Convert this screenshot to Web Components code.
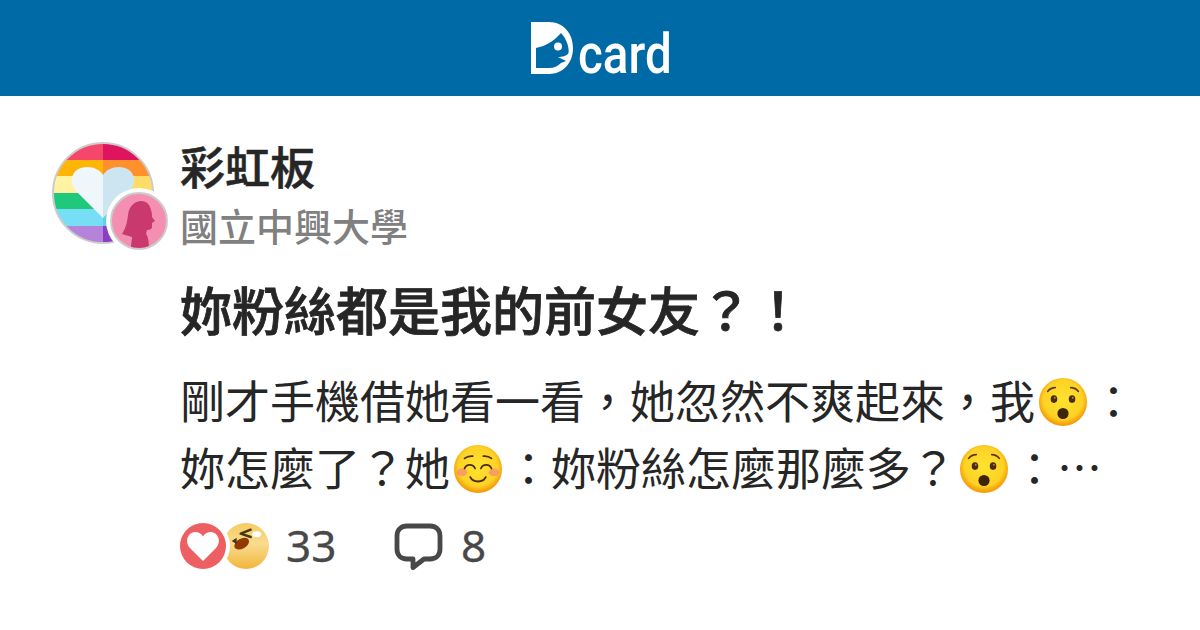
<!DOCTYPE html>
<html lang="zh-Hant">
<head>
<meta charset="utf-8">
<title>Dcard</title>
<style>
  html, body { margin: 0; padding: 0; background: #fff; }
  body { width: 1200px; height: 630px; overflow: hidden; font-family: "Noto Sans CJK TC", "Noto Sans", sans-serif; }
</style>
</head>
<body>
<dc-share-card>
  <span slot="forum">彩虹板</span>
  <span slot="school">國立中興大學</span>
  <span slot="title">妳粉絲都是我的前女友？！</span>
  <span slot="excerpt">剛才手機借她看一看，她忽然不爽起來，我<dc-emoji kind="hushed"></dc-emoji>：<br>妳怎麼了？她<dc-emoji kind="smile"></dc-emoji>：妳粉絲怎麼那麼多？<dc-emoji kind="hushed"></dc-emoji>：…</span>
</dc-share-card>

<script>
class DcHeader extends HTMLElement {
  constructor() {
    super();
    this.attachShadow({ mode: 'open' });
    this.shadowRoot.innerHTML = `
      <style>
        :host { display: flex; height: 96px; background: #006aa6; align-items: center; justify-content: center; }
        .logo { display: flex; align-items: flex-end; height: 52px; margin-top: -1px; width: 138px; }
        svg { display: block; width: 42px; height: 52px; }
        .word {
          display: block; width: 90px; margin-left: 5px;
          color: #fff; font: 500 56px/52px Roboto, sans-serif;
          height: 52px; transform: translateY(6px) scaleX(.85); transform-origin: 0 50%;
        }
      </style>
      <div class="logo">
        <svg viewBox="0 0 42 52">
          <path fill="#fff" fill-rule="evenodd" d="M0 0H18C32 0 42 11 42 26S32 52 18 52H0ZM5 26V46H18C23 46 27 44 30 41L35 39L27 35C31 35 36 34 37.5 31C38.5 27 36 17 30 11C23 19 15 24 5 26Z"/>
          <circle cx="27" cy="24.5" r="4" fill="#fff"/>
        </svg>
        <span class="word">card</span>
      </div>
    `;
  }
}
customElements.define('dc-header', DcHeader);

class DcAvatar extends HTMLElement {
  constructor() {
    super();
    this.attachShadow({ mode: 'open' });
    this.shadowRoot.innerHTML = `
      <style>
        :host { display: block; position: relative; width: 102px; height: 102px; margin-top: 6px; }
        svg { display: block; }
        .persona { position: absolute; left: 54px; top: 46px; width: 66px; height: 66px; }
      </style>
      <svg width="102" height="102" viewBox="0 0 102 102">
        <defs><clipPath id="c"><circle cx="51" cy="51" r="50"/></clipPath></defs>
        <g clip-path="url(#c)">
          <rect x="0" y="0" width="51" height="18" fill="#f4476b"/><rect x="51" y="0" width="51" height="18" fill="#df145f"/>
          <rect x="0" y="18" width="51" height="16" fill="#ffb508"/><rect x="51" y="18" width="51" height="16" fill="#ff902b"/>
          <rect x="0" y="34" width="51" height="17" fill="#fff3a3"/><rect x="51" y="34" width="51" height="17" fill="#ffdc68"/>
          <rect x="0" y="51" width="51" height="16" fill="#1fc97c"/><rect x="51" y="51" width="51" height="16" fill="#12b76c"/>
          <rect x="0" y="67" width="51" height="17" fill="#76dff6"/><rect x="51" y="67" width="51" height="17" fill="#5fcfee"/>
          <rect x="0" y="84" width="51" height="18" fill="#b583da"/><rect x="51" y="84" width="51" height="18" fill="#8b3fc2"/>
        </g>
        <path fill="#f0f7fb" d="M51 76L25 50C15 40 20 25 35 25C42 25 48 28 51 33Z"/>
        <path fill="#cde4f1" d="M51 76L77 50C87 40 82 25 67 25C60 25 54 28 51 33Z"/>
        <circle cx="51" cy="51" r="50" fill="none" stroke="#cccccc" stroke-width="2"/>
      </svg>
      <svg class="persona" viewBox="0 0 66 66">
        <defs><clipPath id="p"><circle cx="33" cy="33" r="28"/></clipPath></defs>
        <circle cx="33" cy="33" r="33" fill="#fff"/>
        <circle cx="33" cy="33" r="28" fill="#f48fb1"/>
        <path clip-path="url(#p)" fill="#c9396d" d="M16 46C19 41 21 36 22 27C23 18 29 13 35 13C41 13 44 17 45 22C46 25 46 27 46 29L49 33L46 35L46 39C46 41 44 42 41 42L40 46C42 48 43 53 43 62L25 62C25 55 26 52 26 49Z"/>
        <circle cx="33" cy="33" r="28" fill="none" stroke="#cccccc" stroke-width="2"/>
      </svg>
    `;
  }
}
customElements.define('dc-avatar', DcAvatar);

class DcEmoji extends HTMLElement {
  constructor() {
    super();
    this.attachShadow({ mode: 'open' });
  }

  connectedCallback() {
    this.render();
  }

  render() {
    const kind = this.getAttribute('kind') || 'hushed';
    const grad = `<radialGradient id="g" cx="50%" cy="45%" r="52%">
        <stop offset="0" stop-color="#ffe22f"/><stop offset=".78" stop-color="#fdd225"/><stop offset="1" stop-color="#f59e0b"/>
      </radialGradient>`;
    const hushed = `
      <path d="M10 15Q13 11 18 11M34 11Q39 11 42 15" fill="none" stroke="#5d3a12" stroke-width="1.7" stroke-linecap="round"/>
      <ellipse cx="16.6" cy="23" rx="3.4" ry="4" fill="#4a2c0c"/><ellipse cx="35.4" cy="23" rx="3.4" ry="4" fill="#4a2c0c"/>
      <circle cx="17.4" cy="21.6" r="1" fill="#a98a55"/><circle cx="36.2" cy="21.6" r="1" fill="#a98a55"/>
      <ellipse cx="26" cy="38" rx="5.8" ry="5.8" fill="#3f2508"/>`;
    const smile = `
      <ellipse cx="9.3" cy="29.5" rx="5.5" ry="4" fill="#f58b7a" opacity=".75"/><ellipse cx="42.7" cy="29.5" rx="5.5" ry="4" fill="#f58b7a" opacity=".75"/>
      <path d="M12 15C14.5 13 17.5 12.2 20.5 12.6M31.5 12.6C34.5 12.2 37.5 13 40 15M12 25.5C14 20.5 21 20.5 23 25.5M29 25.5C31 20.5 38 20.5 40 25.5" fill="none" stroke="#4a2c0c" stroke-width="1.8" stroke-linecap="round"/>
      <path d="M18 34.5C21 40.5 31 40.5 34 34.5" fill="none" stroke="#4a2c0c" stroke-width="2" stroke-linecap="round"/>`;
    this.shadowRoot.innerHTML = `
      <style>
        :host { display: inline-block; width: 52px; height: 50px; margin: 0 2px; vertical-align: -8px; }
        svg { display: block; width: 50px; height: 50px; margin: 0 1px; }
      </style>
      <svg viewBox="0 0 52 52">
        <defs>${grad}</defs>
        <circle cx="26" cy="26" r="25" fill="url(#g)"/>
        ${kind === 'smile' ? smile : hushed}
      </svg>
    `;
  }
}
customElements.define('dc-emoji', DcEmoji);

class DcStats extends HTMLElement {
  constructor() {
    super();
    this.attachShadow({ mode: 'open' });
    this.shadowRoot.innerHTML = `
      <style>
        :host { display: flex; align-items: center; height: 50px; color: #484848; font: 400 44px/50px "Noto Sans", sans-serif; }
        svg { display: block; flex: none; }
        span { margin-top: -2px; -webkit-text-stroke: .3px #484848; }
        .likes { width: 90px; margin-right: 16px; }
        .n-like { margin-right: 58px; width: 50px; }
        .chat { margin-right: 18px; width: 49px; height: 47px; }
      </style>
      <svg class="likes" width="90" height="48" viewBox="0 0 90 48">
        <defs>
          <linearGradient id="h" x1="0" y1="0" x2="0" y2="1"><stop offset="0" stop-color="#f6cb5e"/><stop offset=".45" stop-color="#f8dc90"/><stop offset="1" stop-color="#f2b53a"/></linearGradient>
          <clipPath id="f"><path d="M0 0H90V48H0ZM23 -3A27 27 0 1 0 23 51A27 27 0 1 0 23 -3Z" clip-rule="evenodd"/></clipPath>
        </defs>
        <g clip-path="url(#f)">
          <circle cx="66" cy="24" r="23" fill="url(#h)"/>
          <ellipse cx="61.7" cy="21.7" rx="8" ry="5" transform="rotate(-30 61.7 21.7)" fill="#8f3a06"/>
          <path d="M70.7 7.7L60.7 11.7L70.7 15" fill="none" stroke="#4a3515" stroke-width="2.4" stroke-linecap="round" stroke-linejoin="round"/>
          <ellipse cx="76.7" cy="12.3" rx="4.5" ry="3" fill="#fff"/>
          <path d="M56.7 15.7L51.7 19L56.7 22.3Z" fill="#4a3515"/>
        </g>
        <circle cx="23" cy="24" r="23" fill="#ee5f63"/>
        <path fill="#fff" d="M23 39L10 26C4 19.5 8 10 15.5 10C18.5 10 21.5 11.5 23 14.5C24.5 11.5 27.5 10 30.5 10C38 10 42 19.5 36 26Z"/>
      </svg>
      <span class="n-like">33</span>
      <svg class="chat" viewBox="0 0 49 47">
        <path fill="none" stroke="#484848" stroke-width="4.8" stroke-linejoin="round" d="M13 3H36C42 3 46 7 46 13V26C46 32 42 36 36 36H30L19 44.5V36H13C7 36 3 32 3 26V13C3 7 7 3 13 3Z"/>
      </svg>
      <span>8</span>
    `;
  }
}
customElements.define('dc-stats', DcStats);

class DcShareCard extends HTMLElement {
  constructor() {
    super();
    this.attachShadow({ mode: 'open' });
    this.shadowRoot.innerHTML = `
      <style>
        :host { display: block; width: 1200px; height: 630px; color: #262626; }
        main { display: grid; grid-template-columns: 102px 1fr; column-gap: 26px; padding: 40px 40px 0 52px; }
        .meta { display: flex; flex-direction: column; }
        .forum { font-size: 45px; line-height: 60px; font-weight: 500; -webkit-text-stroke: .5px #262626; }
        .school { font-size: 38px; line-height: 60px; font-weight: 500; color: #808080; margin-top: -1px; }
        .post { grid-column: 2; }
        .title { font-size: 52px; line-height: 76px; font-weight: 500; margin-top: 16px; -webkit-text-stroke: .8px #262626; }
        .excerpt { font-size: 45px; line-height: 67px; margin-top: 19px; white-space: nowrap; }
        dc-stats { margin-top: 21px; }
      </style>
      <dc-header></dc-header>
      <main>
        <dc-avatar></dc-avatar>
        <div class="meta">
          <div class="forum"><slot name="forum"></slot></div>
          <div class="school"><slot name="school"></slot></div>
        </div>
        <div class="post">
          <div class="title"><slot name="title"></slot></div>
          <div class="excerpt"><slot name="excerpt"></slot></div>
          <dc-stats></dc-stats>
        </div>
      </main>
    `;
  }
}
customElements.define('dc-share-card', DcShareCard);
</script>
</body>
</html>
